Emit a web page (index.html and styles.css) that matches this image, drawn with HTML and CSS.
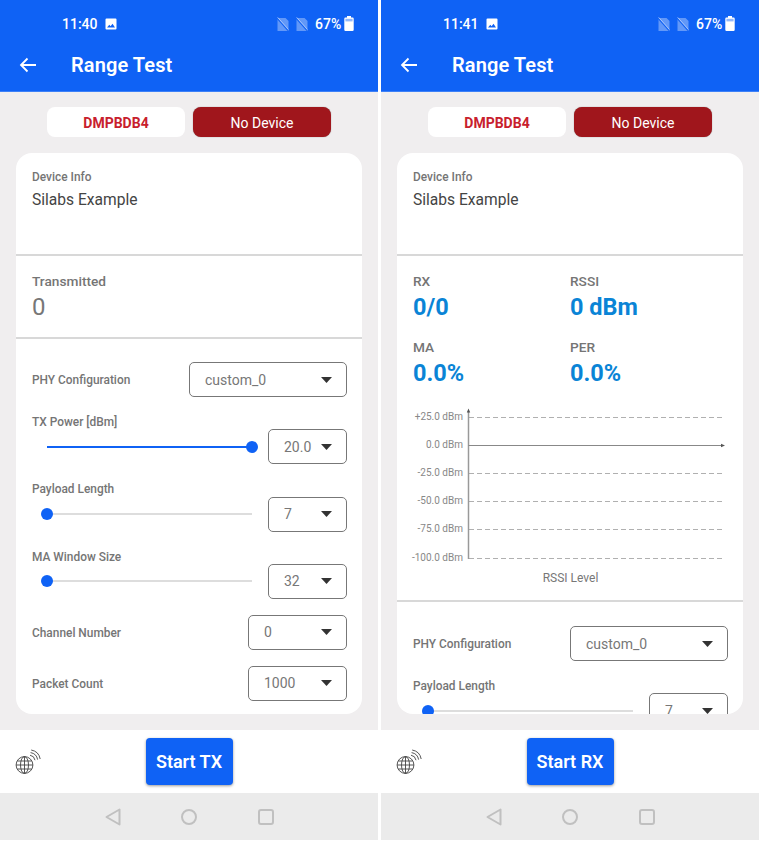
FILE: index.html
```html
<!DOCTYPE html>
<html lang="en">

<head>
    <meta charset="UTF-8">
    <meta name="viewport" content="width=device-width, initial-scale=1.0">
    <title>Range Test</title>
    <link rel="stylesheet" href="styles.css">
</head>

<body>
    <svg class="icon-defs" width="0" height="0">
        <symbol id="picture" viewBox="0 0 12 12">
            <path d="M1.5 0.5h9a1 1 0 0 1 1 1v9a1 1 0 0 1-1 1h-9a1 1 0 0 1-1-1v-9a1 1 0 0 1 1-1z M2 9.5h8L7.5 5.8 5.6 8.2 4.3 6.8z" fill="#fff" fill-rule="evenodd"/>
        </symbol>
        <symbol id="sim" viewBox="0 0 12 14">
            <path d="M0.5 1h8L11.5 4v10h-11z" fill="#fff" opacity="0.35"/>
            <path d="M0 1.2L11 13.6" stroke="#0f62f5" stroke-width="1.1"/>
            <path d="M0.5 0.2L11.5 12.6" stroke="#fff" stroke-width="0.9" opacity="0.5"/>
        </symbol>
        <symbol id="battery" viewBox="0 0 10 15">
            <path d="M3 0h4v1.5h1.5a1.2 1.2 0 0 1 1.2 1.2v11a1.2 1.2 0 0 1-1.2 1.2h-7a1.2 1.2 0 0 1-1.2-1.2v-11a1.2 1.2 0 0 1 1.2-1.2H3z" fill="#fff"/>
            <rect x="1.4" y="2.8" width="7.2" height="2.6" fill="#0f62f5" opacity="0.45"/>
        </symbol>
        <symbol id="back" viewBox="0 0 18 16">
            <path d="M17 8H2M8.5 1.5L2 8l6.5 6.5" fill="none" stroke="#fff" stroke-width="1.8"/>
        </symbol>
        <symbol id="globe" viewBox="0 0 26 26">
            <g fill="none" stroke="#444" stroke-width="0.9">
                <circle cx="9.5" cy="16" r="8.4"/>
                <ellipse cx="9.5" cy="16" rx="4" ry="8.4"/>
                <path d="M9.5 7.6v16.8M1.1 16h16.8M2.2 12h14.6M2.2 20h14.6"/>
                <path d="M15 6.2a6 6 0 0 1 5 5M15.6 3.6a8.6 8.6 0 0 1 7 7M16.2 1a11.2 11.2 0 0 1 9 9"/>
            </g>
        </symbol>
        <symbol id="caret" viewBox="0 0 11 6">
            <path d="M0 0h11L5.5 6z" fill="#333"/>
        </symbol>
        <symbol id="nav-back" viewBox="0 0 16 18">
            <path d="M14.5 1.5v15L1.5 9z" fill="none" stroke="#c0c0c0" stroke-width="2" stroke-linejoin="round"/>
        </symbol>
    </svg>

    <div class="screens">
        <section class="phone">
            <header class="topbar">
                <div class="status">
                    <span class="time">11:40</span>
                    <svg class="status-pic"><use href="#picture"/></svg>
                    <svg class="status-sim first"><use href="#sim"/></svg>
                    <svg class="status-sim"><use href="#sim"/></svg>
                    <span class="percent">67%</span>
                    <svg class="status-batt"><use href="#battery"/></svg>
                </div>
                <div class="appbar">
                    <svg class="back"><use href="#back"/></svg>
                    <h1>Range Test</h1>
                </div>
            </header>
            <main class="content">
                <div class="device-btns">
                    <div class="pill pill-name">DMPBDB4</div>
                    <div class="pill pill-state">No Device</div>
                </div>
                <div class="card">
                    <div class="info">
                        <div class="small-label">Device Info</div>
                        <div class="info-value">Silabs Example</div>
                    </div>
                    <div class="transmitted">
                        <div class="tx-label">Transmitted</div>
                        <div class="tx-value">0</div>
                    </div>
                    <div class="settings">
                        <div class="row">
                            <span class="small-label">PHY Configuration</span>
                            <div class="select select-wide">custom_0<svg class="caret"><use href="#caret"/></svg></div>
                        </div>
                        <div class="slider-block">
                            <div class="small-label">TX Power [dBm]</div>
                            <div class="row">
                                <div class="slider"><div class="fill"></div><div class="thumb thumb-end"></div></div>
                                <div class="select">20.0<svg class="caret"><use href="#caret"/></svg></div>
                            </div>
                        </div>
                        <div class="slider-block">
                            <div class="small-label">Payload Length</div>
                            <div class="row">
                                <div class="slider"><div class="thumb"></div></div>
                                <div class="select">7<svg class="caret"><use href="#caret"/></svg></div>
                            </div>
                        </div>
                        <div class="slider-block">
                            <div class="small-label">MA Window Size</div>
                            <div class="row">
                                <div class="slider"><div class="thumb"></div></div>
                                <div class="select">32<svg class="caret"><use href="#caret"/></svg></div>
                            </div>
                        </div>
                        <div class="row">
                            <span class="small-label">Channel Number</span>
                            <div class="select select-mid">0<svg class="caret"><use href="#caret"/></svg></div>
                        </div>
                        <div class="row">
                            <span class="small-label">Packet Count</span>
                            <div class="select select-mid">1000<svg class="caret"><use href="#caret"/></svg></div>
                        </div>
                    </div>
                </div>
            </main>
            <div class="actions">
                <svg class="globe"><use href="#globe"/></svg>
                <button class="start">Start TX</button>
            </div>
            <nav class="navbar">
                <svg class="nav-back"><use href="#nav-back"/></svg>
                <span class="nav-home"></span>
                <span class="nav-recent"></span>
            </nav>
        </section>

        <section class="phone">
            <header class="topbar">
                <div class="status">
                    <span class="time">11:41</span>
                    <svg class="status-pic"><use href="#picture"/></svg>
                    <svg class="status-sim first"><use href="#sim"/></svg>
                    <svg class="status-sim"><use href="#sim"/></svg>
                    <span class="percent">67%</span>
                    <svg class="status-batt"><use href="#battery"/></svg>
                </div>
                <div class="appbar">
                    <svg class="back"><use href="#back"/></svg>
                    <h1>Range Test</h1>
                </div>
            </header>
            <main class="content">
                <div class="device-btns">
                    <div class="pill pill-name">DMPBDB4</div>
                    <div class="pill pill-state">No Device</div>
                </div>
                <div class="card">
                    <div class="info">
                        <div class="small-label">Device Info</div>
                        <div class="info-value">Silabs Example</div>
                    </div>
                    <div class="stats">
                        <div class="stat"><div class="tx-label">RX</div><div class="stat-value">0/0</div></div>
                        <div class="stat"><div class="tx-label">RSSI</div><div class="stat-value">0 dBm</div></div>
                        <div class="stat"><div class="tx-label">MA</div><div class="stat-value">0.0%</div></div>
                        <div class="stat"><div class="tx-label">PER</div><div class="stat-value">0.0%</div></div>
                    </div>
                    <svg class="chart" viewBox="0 0 346 194" width="346" height="194">
                        <g class="chart-labels">
                            <text x="66" y="11">+25.0 dBm</text>
                            <text x="66" y="39">0.0 dBm</text>
                            <text x="66" y="67">-25.0 dBm</text>
                            <text x="66" y="95">-50.0 dBm</text>
                            <text x="66" y="123">-75.0 dBm</text>
                            <text x="66" y="152">-100.0 dBm</text>
                        </g>
                        <g class="chart-grid">
                            <path d="M72 11.5H327M72 67.5H327M72 95.5H327M72 123.5H327M72 152.5H327"/>
                        </g>
                        <path d="M71.5 5V153" stroke="#999" stroke-width="1.5" fill="none"/>
                        <path d="M71.5 39.5H326" stroke="#888" fill="none"/>
                        <path d="M71.5 2.5l1.7 4h-3.4zM328 39.5l-4-1.7v3.4z" fill="#555"/>
                        <text class="chart-title" x="173.5" y="176">RSSI Level</text>
                    </svg>
                    <div class="settings settings-rx">
                        <div class="row">
                            <span class="small-label">PHY Configuration</span>
                            <div class="select select-wide">custom_0<svg class="caret"><use href="#caret"/></svg></div>
                        </div>
                        <div class="slider-block">
                            <div class="small-label">Payload Length</div>
                            <div class="row">
                                <div class="slider"><div class="thumb"></div></div>
                                <div class="select">7<svg class="caret"><use href="#caret"/></svg></div>
                            </div>
                        </div>
                    </div>
                </div>
            </main>
            <div class="actions">
                <svg class="globe"><use href="#globe"/></svg>
                <button class="start">Start RX</button>
            </div>
            <nav class="navbar">
                <svg class="nav-back"><use href="#nav-back"/></svg>
                <span class="nav-home"></span>
                <span class="nav-recent"></span>
            </nav>
        </section>
    </div>
</body>

</html>
```

FILE: styles.css
```css
* {
    box-sizing: border-box;
}

body {
    margin: 0;
    background-color: #fff;
    font-family: Roboto, sans-serif;
}

.icon-defs {
    position: absolute;
}

.screens {
    display: flex;
    gap: 3px;
}

.phone {
    width: 378px;
    height: 840px;
    display: flex;
    flex-direction: column;
    background-color: #f0eeef;
}

.topbar {
    height: 92px;
    background-color: #0f62f5;
    color: #fff;
    border-bottom: 1px solid #3d80f7;
}

.status {
    height: 47px;
    display: flex;
    align-items: center;
    padding-left: 62px;
    font-size: 14px;
    font-weight: 500;
}

.time {
    width: 43px;
}

.status-pic {
    width: 12px;
    height: 12px;
}

.status-sim {
    width: 12px;
    height: 14px;
    margin-left: 7px;
}

.status-sim.first {
    margin-left: 160px;
}

.percent {
    margin-left: 7px;
    width: 29px;
}

.status-batt {
    width: 10px;
    height: 15px;
}

.appbar {
    height: 36px;
    display: flex;
    align-items: center;
    padding-left: 19px;
}

.back {
    width: 18px;
    height: 16px;
}

.appbar h1 {
    margin: 0 0 0 34px;
    font-size: 20px;
    font-weight: 600;
    letter-spacing: 0.1px;
}

.content {
    flex: 1;
    min-height: 0;
    display: flex;
    flex-direction: column;
    padding: 15px 16px 16px;
}

.device-btns {
    display: flex;
    justify-content: center;
    gap: 8px;
    padding-right: 8px;
    padding-left: 8px;
}

.pill {
    width: 138px;
    height: 30px;
    padding-top: 1px;
    border-radius: 8px;
    display: flex;
    align-items: center;
    justify-content: center;
    font-size: 14px;
}

.pill-name {
    background-color: #fff;
    color: #c8202d;
    font-weight: 700;
}

.pill-state {
    background-color: #a0161c;
    color: #fff;
    box-shadow: 0 0 1px rgba(0, 0, 0, 0.5);
}

.card {
    flex: 1;
    min-height: 0;
    margin-top: 16px;
    background-color: #fff;
    border-radius: 16px;
    overflow: hidden;
}

.small-label {
    font-size: 11.9px;
    font-weight: 500;
    line-height: 16.33px;
    color: #757575;
}

.settings .small-label {
    padding-top: 3px;
    line-height: 13.33px;
}

.info {
    height: 103px;
    padding: 16px 16px 0;
    border-bottom: 2px solid #d8d8d8;
}

.info-value {
    margin-top: 4px;
    font-size: 15.6px;
    line-height: 22px;
    color: #444;
}

.transmitted {
    height: 83px;
    padding: 15px 16px 0;
    border-bottom: 2px solid #d8d8d8;
}

.tx-label {
    font-size: 13.7px;
    font-weight: 500;
    line-height: 20px;
    color: #757575;
}

.tx-value {
    font-size: 24px;
    line-height: 32px;
    color: #777;
}

.stats {
    display: grid;
    grid-template-columns: 157px 1fr;
    row-gap: 8px;
    padding: 15px 16px 0;
}

.stat {
    height: 58px;
}

.stat-value {
    font-size: 23.5px;
    font-weight: 700;
    line-height: 32px;
    color: #0a84d6;
}

.chart {
    display: block;
    margin-top: 11px;
    border-bottom: 2px solid #d8d8d8;
    height: 196px;
}

.chart-labels text {
    font-size: 10px;
    fill: #888;
    text-anchor: end;
    dominant-baseline: middle;
}

.chart-grid path {
    stroke: #b0b0b0;
    stroke-dasharray: 5 3;
    fill: none;
}

.chart-title {
    font-size: 12px;
    fill: #777;
    text-anchor: middle;
}

.settings {
    display: flex;
    flex-direction: column;
    gap: 16px;
    padding: 23px 15px 0 16px;
}

.settings-rx {
    padding-top: 24px;
}

.row {
    display: flex;
    align-items: center;
    justify-content: space-between;
}

.select {
    width: 79px;
    height: 35px;
    flex-shrink: 0;
    padding: 0 14px 0 15px;
    display: flex;
    align-items: center;
    justify-content: space-between;
    border: 1px solid #777;
    border-bottom-width: 1.5px;
    border-right-width: 1.5px;
    border-radius: 5px;
    font-size: 14px;
    color: #777;
}

.select-wide {
    width: 158px;
}

.select-mid {
    width: 99px;
}

.caret {
    width: 11px;
    height: 6px;
}

.slider {
    position: relative;
    width: 205px;
    height: 2px;
    margin-left: 15px;
    background-color: #ddd;
}

.fill {
    height: 100%;
    background-color: #0f62f5;
}

.thumb {
    position: absolute;
    top: -5px;
    left: -6px;
    width: 12px;
    height: 12px;
    border-radius: 50%;
    background-color: #0f62f5;
}

.thumb-end {
    left: auto;
    right: -6px;
}

.actions {
    position: relative;
    height: 63px;
    display: flex;
    align-items: center;
    justify-content: center;
    background-color: #fff;
}

.globe {
    position: absolute;
    left: 15px;
    top: 19px;
    width: 26px;
    height: 26px;
}

.start {
    width: 87px;
    height: 47px;
    border: none;
    border-radius: 4px;
    background-color: #0f62f5;
    color: #fff;
    font-family: Roboto, sans-serif;
    font-size: 18px;
    font-weight: 600;
    box-shadow: 0 1px 3px rgba(0, 0, 0, 0.4);
}

.navbar {
    height: 47px;
    display: flex;
    align-items: center;
    padding-left: 105px;
    background-color: #ebebeb;
}

.nav-back {
    width: 16px;
    height: 18px;
}

.nav-home {
    width: 16px;
    height: 16px;
    margin-left: 60px;
    border: 2px solid #c0c0c0;
    border-radius: 50%;
}

.nav-recent {
    width: 16px;
    height: 16px;
    margin-left: 61px;
    border: 2px solid #c0c0c0;
    border-radius: 3px;
}
```
